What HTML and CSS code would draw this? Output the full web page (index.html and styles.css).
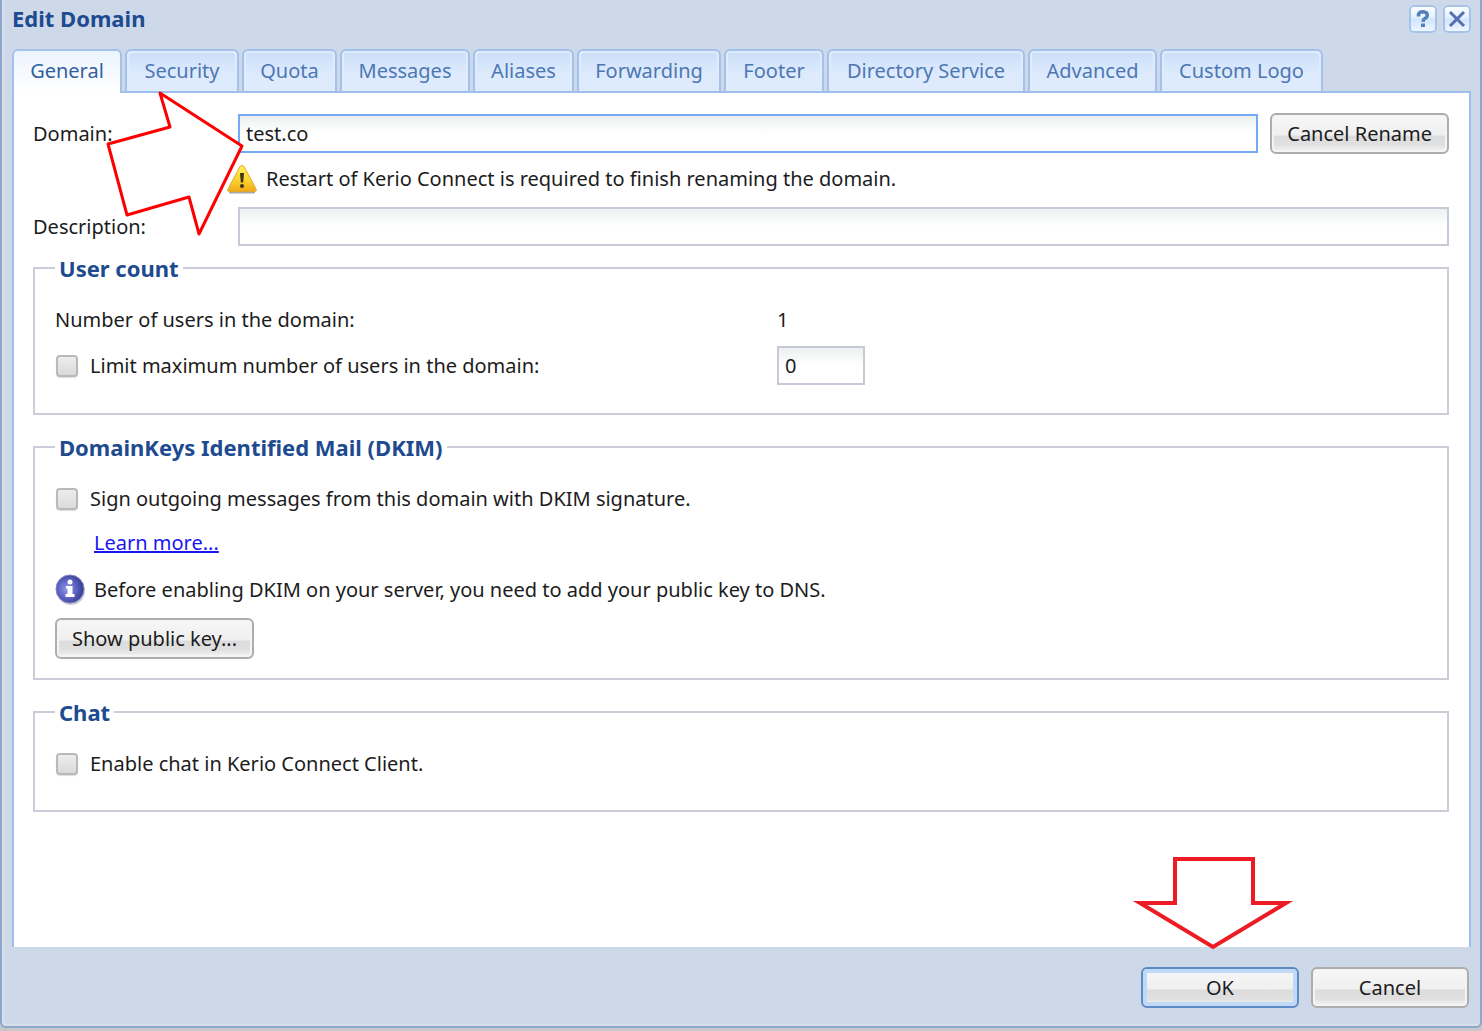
FILE: index.html
```html
<!DOCTYPE html>
<html lang="en">
<head>
<meta charset="utf-8">
<title>Edit Domain</title>
<link rel="stylesheet" href="styles.css">
</head>
<body>
<form class="dialog">
  <header class="titlebar">
    <h1 class="title">Edit Domain</h1>
    <div class="tools">
      <button type="button" class="tool" aria-label="Help">
        <svg width="28" height="28" viewBox="0 0 28 28" aria-hidden="true">
          <path d="M9.500 11.500V9.200Q10.500 6.800 14 6.800Q18.300 7 18.300 10.200Q18.300 12.300 15.800 13.500Q14.200 14.300 14 16.800" fill="none" stroke="#5482b5" stroke-width="3.500"/>
          <rect x="12" y="18.500" width="4" height="3.500" fill="#5482b5"/>
        </svg>
      </button>
      <button type="button" class="tool" aria-label="Close">
        <svg width="28" height="28" viewBox="0 0 28 28" aria-hidden="true">
          <path d="M7 7L21 21M21 7L7 21" fill="none" stroke="#566fb4" stroke-width="3"/>
        </svg>
      </button>
    </div>
  </header>

  <nav class="tabs" role="tablist">
    <button type="button" role="tab" class="tab tab-active" aria-selected="true">General</button>
    <button type="button" role="tab" class="tab">Security</button>
    <button type="button" role="tab" class="tab">Quota</button>
    <button type="button" role="tab" class="tab">Messages</button>
    <button type="button" role="tab" class="tab">Aliases</button>
    <button type="button" role="tab" class="tab">Forwarding</button>
    <button type="button" role="tab" class="tab">Footer</button>
    <button type="button" role="tab" class="tab">Directory Service</button>
    <button type="button" role="tab" class="tab">Advanced</button>
    <button type="button" role="tab" class="tab">Custom Logo</button>
  </nav>

  <main class="panel">
    <div class="row">
      <label class="row-label" for="domain">Domain:</label>
      <input class="field field-active" id="domain" type="text" value="test.co">
      <button type="button" class="button">Cancel Rename</button>
    </div>
    <p class="notice">
      <svg class="notice-icon" width="32" height="30" viewBox="0 0 32 30" aria-hidden="true">
        <defs>
          <linearGradient id="warn" x1="0" y1="0" x2="0" y2="1">
            <stop offset="0" stop-color="#fff45c"/>
            <stop offset="0.600" stop-color="#fbd12c"/>
            <stop offset="1" stop-color="#f0a81c"/>
          </linearGradient>
        </defs>
        <path d="M4 28.500H28" stroke="#a7a7a7" stroke-width="2" stroke-linecap="round"/>
        <path d="M16 1.500Q17.500 1.500 18.300 3L30 25Q31 27.500 28.500 27.500H3.500Q1 27.500 2 25L13.700 3Q14.500 1.500 16 1.500Z" fill="url(#warn)" stroke="#dfa92b"/>
        <path d="M14 9H18L17.200 18.500H14.800Z" fill="#3f3413"/>
        <circle cx="16" cy="22" r="2" fill="#3f3413"/>
      </svg>
      Restart of Kerio Connect is required to finish renaming the domain.
    </p>
    <div class="row">
      <label class="row-label" for="description">Description:</label>
      <input class="field" id="description" type="text">
    </div>

    <fieldset class="group">
      <legend class="legend">User count</legend>
      <div class="group-body users">
        <span>Number of users in the domain:</span>
        <output>1</output>
        <label class="check"><input class="box" type="checkbox">Limit maximum number of users in the domain:</label>
        <input class="field field-short" type="text" value="0" aria-label="Maximum number of users">
      </div>
    </fieldset>

    <fieldset class="group group-dkim">
      <legend class="legend">DomainKeys Identified Mail (DKIM)</legend>
      <div class="group-body dkim">
        <label class="check"><input class="box" type="checkbox">Sign outgoing messages from this domain with DKIM signature.</label>
        <a class="learn" href="#dkim">Learn more...</a>
        <p class="info">
          <svg width="32" height="32" viewBox="0 0 32 32" aria-hidden="true">
            <defs>
              <radialGradient id="ball" cx="0.400" cy="0.500" r="0.600">
                <stop offset="0" stop-color="#9299ea"/>
                <stop offset="0.550" stop-color="#5c62c0"/>
                <stop offset="1" stop-color="#343a8e"/>
              </radialGradient>
            </defs>
            <circle cx="16" cy="17" r="14" fill="#c9cbd8"/>
            <circle cx="15" cy="15" r="14" fill="url(#ball)" stroke="#8185c4"/>
            <circle cx="15" cy="8" r="2.500" fill="#fff"/>
            <path d="M11 12H17.500V20H19.500V23H10.500V20H12.500V14.500H11Z" fill="#fff"/>
          </svg>
          Before enabling DKIM on your server, you need to add your public key to DNS.
        </p>
        <button type="button" class="button">Show public key...</button>
      </div>
    </fieldset>

    <fieldset class="group">
      <legend class="legend">Chat</legend>
      <div class="group-body">
        <label class="check"><input class="box" type="checkbox">Enable chat in Kerio Connect Client.</label>
      </div>
    </fieldset>

    <svg class="arrow arrow-domain" width="142" height="148" viewBox="0 0 142 148" aria-hidden="true">
      <path d="M56 4L138 57L95 145L85 108L23 126L4 55L66 38Z" fill="#fff" stroke="#fe0000" stroke-width="3" stroke-linejoin="round"/>
    </svg>
    <svg class="arrow arrow-ok" width="164" height="94" viewBox="0 0 164 94" aria-hidden="true">
      <path d="M44 3H122V47H155L82 91L9 47H44Z" fill="#fff" stroke="#ed1c24" stroke-width="4"/>
    </svg>
  </main>

  <footer class="actions">
    <button type="submit" class="button button-wide button-default">OK</button>
    <button type="button" class="button button-wide">Cancel</button>
  </footer>
</form>
</body>
</html>
```
FILE: styles.css
```css
* {
  box-sizing: border-box;
}

body {
  margin: 0;
  background: #c6c8cb;
  color: #1c1c1c;
  font: 20px/26px "Noto Sans", "Open Sans", sans-serif;
}

button,
input {
  font: inherit;
  color: inherit;
}

p {
  margin: 0;
}

.dialog {
  display: flex;
  flex-direction: column;
  min-height: calc(100vh - 3px);
  padding: 0 9px 0 10px;
  background: #cdd9e8;
  border: 2px solid #8fa6cb;
  border-top: 0;
  border-radius: 0 0 6px 6px;
  box-shadow: inset 2px -2px 0 #d7e1ec;
}

/* Title bar */
.titlebar {
  display: flex;
  justify-content: space-between;
  height: 49px;
  padding-top: 5px;
}

.title {
  margin: 0;
  font-size: 22px;
  line-height: 26px;
  color: #1e4a90;
}

.tools {
  display: flex;
  gap: 6px;
}

.tool {
  width: 28px;
  height: 28px;
  padding: 0;
  border: 0;
  border-radius: 5px;
  background: linear-gradient(#fff, #e6f1ff 45%, #d0e5ff 50%, #f4f9ff);
  box-shadow: inset 0 0 0 2px #a6c3ea;
}

.tool svg {
  display: block;
}

/* Tabs */
.tabs {
  display: grid;
  grid-template-columns: 110px 114px 95px 130px 101px 144px 100px 198px 129px 163px;
  gap: 3px;
}

.tab {
  height: 42px;
  padding: 0;
  border: 2px solid #a3c1ea;
  border-bottom: 0;
  border-radius: 6px 6px 0 0;
  background: linear-gradient(#cbdff8, #deebfd 60%);
  box-shadow: inset 0 0 0 2px #dfecfd;
  color: #4d77b3;
  white-space: nowrap;
}

.tab-active {
  height: 44px;
  margin-bottom: -2px;
  padding-bottom: 2px;
  z-index: 1;
  background: linear-gradient(#ecf4fe, #fff);
  box-shadow: none;
  color: #315f9f;
}

/* Panel */
.panel {
  position: relative;
  flex: 1;
  padding: 20px 20px 0 19px;
  background: #fff;
  border: 2px solid #9dbfec;
  border-bottom: 0;
}

.row {
  display: flex;
  align-items: center;
}

.row-label {
  flex: 0 0 205px;
}

.field {
  flex: 1;
  min-width: 0;
  height: 39px;
  padding: 0 6px;
  border: 2px solid #c6c9d6;
  border-radius: 0;
  outline: 0;
  background: linear-gradient(#edf0f0, #fff 50%);
}

.field-active {
  margin-right: 12px;
  border-color: #75a8f5;
}

.field-short {
  width: 88px;
}

.button {
  height: 41px;
  padding: 0 15px;
  border: 2px solid #adadad;
  border-radius: 6px;
  background: linear-gradient(#f7f7f7, #efefef 55%, #dcdcdc 56%, #e0e0e0 80%, #f4f4f4);
  box-shadow: inset 0 0 0 2px #f4f4f4;
  white-space: nowrap;
}

.notice {
  display: flex;
  align-items: center;
  gap: 8px;
  height: 53px;
  padding: 0 0 4px 193px;
}

/* Groups */
.group {
  min-width: 0;
  margin: 0 0 19px;
  padding: 0 20px;
  border: 2px solid #cbced9;
}

.row + .group {
  margin-top: 9px;
}

.legend {
  padding: 0 4px;
  font-size: 22px;
  font-weight: bold;
  line-height: 26px;
  color: #1e4a90;
}

.group-body {
  padding: 26px 0 33px;
}

.users {
  display: grid;
  grid-template-columns: 722px 88px;
  row-gap: 13px;
  align-items: center;
  padding-bottom: 28px;
}

.dkim {
  display: flex;
  flex-direction: column;
  align-items: flex-start;
  padding-bottom: 19px;
}

.check {
  display: flex;
  align-items: center;
  gap: 12px;
}

.box {
  appearance: none;
  width: 22px;
  height: 22px;
  margin: 0 0 0 1px;
  border: 2px solid #b9b9b9;
  border-radius: 4px;
  background: linear-gradient(#ededed, #dadada);
  box-shadow: 0 1px 1px #dedede;
}

.learn {
  margin: 18px 0 18px 39px;
  color: #1a16f0;
}

.info {
  display: flex;
  align-items: center;
  gap: 7px;
  margin-bottom: 12px;
}

/* Callout arrows drawn over the form */
.arrow {
  position: absolute;
  pointer-events: none;
}

.arrow-domain {
  top: -4px;
  left: 90px;
}

.arrow-ok {
  right: 174px;
  bottom: -3px;
}

/* Footer */
.actions {
  display: flex;
  justify-content: flex-end;
  gap: 12px;
  padding: 20px 2px 18px 0;
}

.button-wide {
  width: 158px;
}

.button-default {
  border-color: #5f8ac4;
  box-shadow: inset 0 0 0 4px #c0d9f6;
}
```
